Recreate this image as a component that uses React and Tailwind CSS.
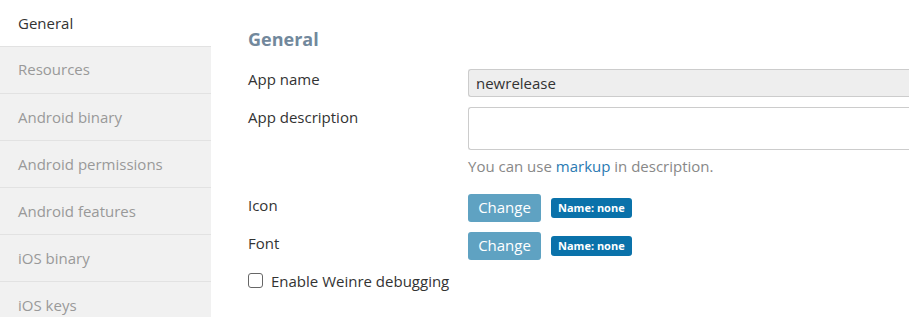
import { useState } from "react";

const tabs = [
  "General",
  "Resources",
  "Android binary",
  "Android permissions",
  "Android features",
  "iOS binary",
  "iOS keys",
];

function FileRow({ label }) {
  return (
    <div className="flex h-[38px] items-start">
      <span className="w-[220px]">{label}</span>
      <div className="flex items-center gap-[10px]">
        <button className="h-[28px] w-[73px] rounded-[3px] bg-[#5fa2c2] text-[15px] text-white">
          Change
        </button>
        <span className="rounded-[3px] bg-[#0a72aa] px-[7px] py-[3px] text-[11px] font-bold leading-[14px] text-white">
          Name: none
        </span>
      </div>
    </div>
  );
}

export default function App() {
  const [active] = useState("General");
  const [debug, setDebug] = useState(false);

  return (
    <div className="flex h-[317px] w-[909px] overflow-hidden bg-white font-['Open_Sans',sans-serif] text-[15px] text-[#333]">
      <aside className="w-[211px] shrink-0 bg-[#f1f1f1]">
        {tabs.map((t, i) => (
          <div
            key={t}
            className={
              t === active
                ? "flex h-[46px] items-center bg-white pl-[18px] text-[#333]"
                : "flex h-[47px] items-center border-t border-[#e2e2e2] pl-[18px] text-[#999] first-of-type:border-t-0"
            }
          >
            {i === 1 ? <span className="-mt-[2px]">{t}</span> : t}
          </div>
        ))}
      </aside>

      <main className="flex-1 pl-[37px] pt-[26px]">
        <h2 className="mb-[15px] text-[18px] font-bold text-[#72889c]">General</h2>

        <div className="flex h-[38px] items-start">
          <span className="w-[220px]">App name</span>
          <div className="mt-[1px] flex h-[28px] flex-1 items-center rounded-l-[3px] border border-r-0 border-[#ccc] bg-[#eee] pl-[7px]">
            newrelease
          </div>
        </div>

        <div className="flex items-start">
          <span className="w-[220px]">App description</span>
          <div className="mt-[1px] flex flex-1 flex-col">
            <div className="h-[43px] rounded-l-[3px] border border-r-0 border-[#ccc] bg-white" />
            <p className="mt-[5px] text-[#888]">
              You can use <span className="text-[#2a7ab2]">markup</span> in description.
            </p>
          </div>
        </div>

        <div className="mt-[16px]">
          <FileRow label="Icon" />
          <FileRow label="Font" />
        </div>

        <label className="flex items-center gap-[8px]">
          <input
            type="checkbox"
            checked={debug}
            onChange={(e) => setDebug(e.target.checked)}
            className="h-[15px] w-[15px] appearance-none rounded-[3px] border border-[#666] bg-white"
          />
          Enable Weinre debugging
        </label>
      </main>
    </div>
  );
}
